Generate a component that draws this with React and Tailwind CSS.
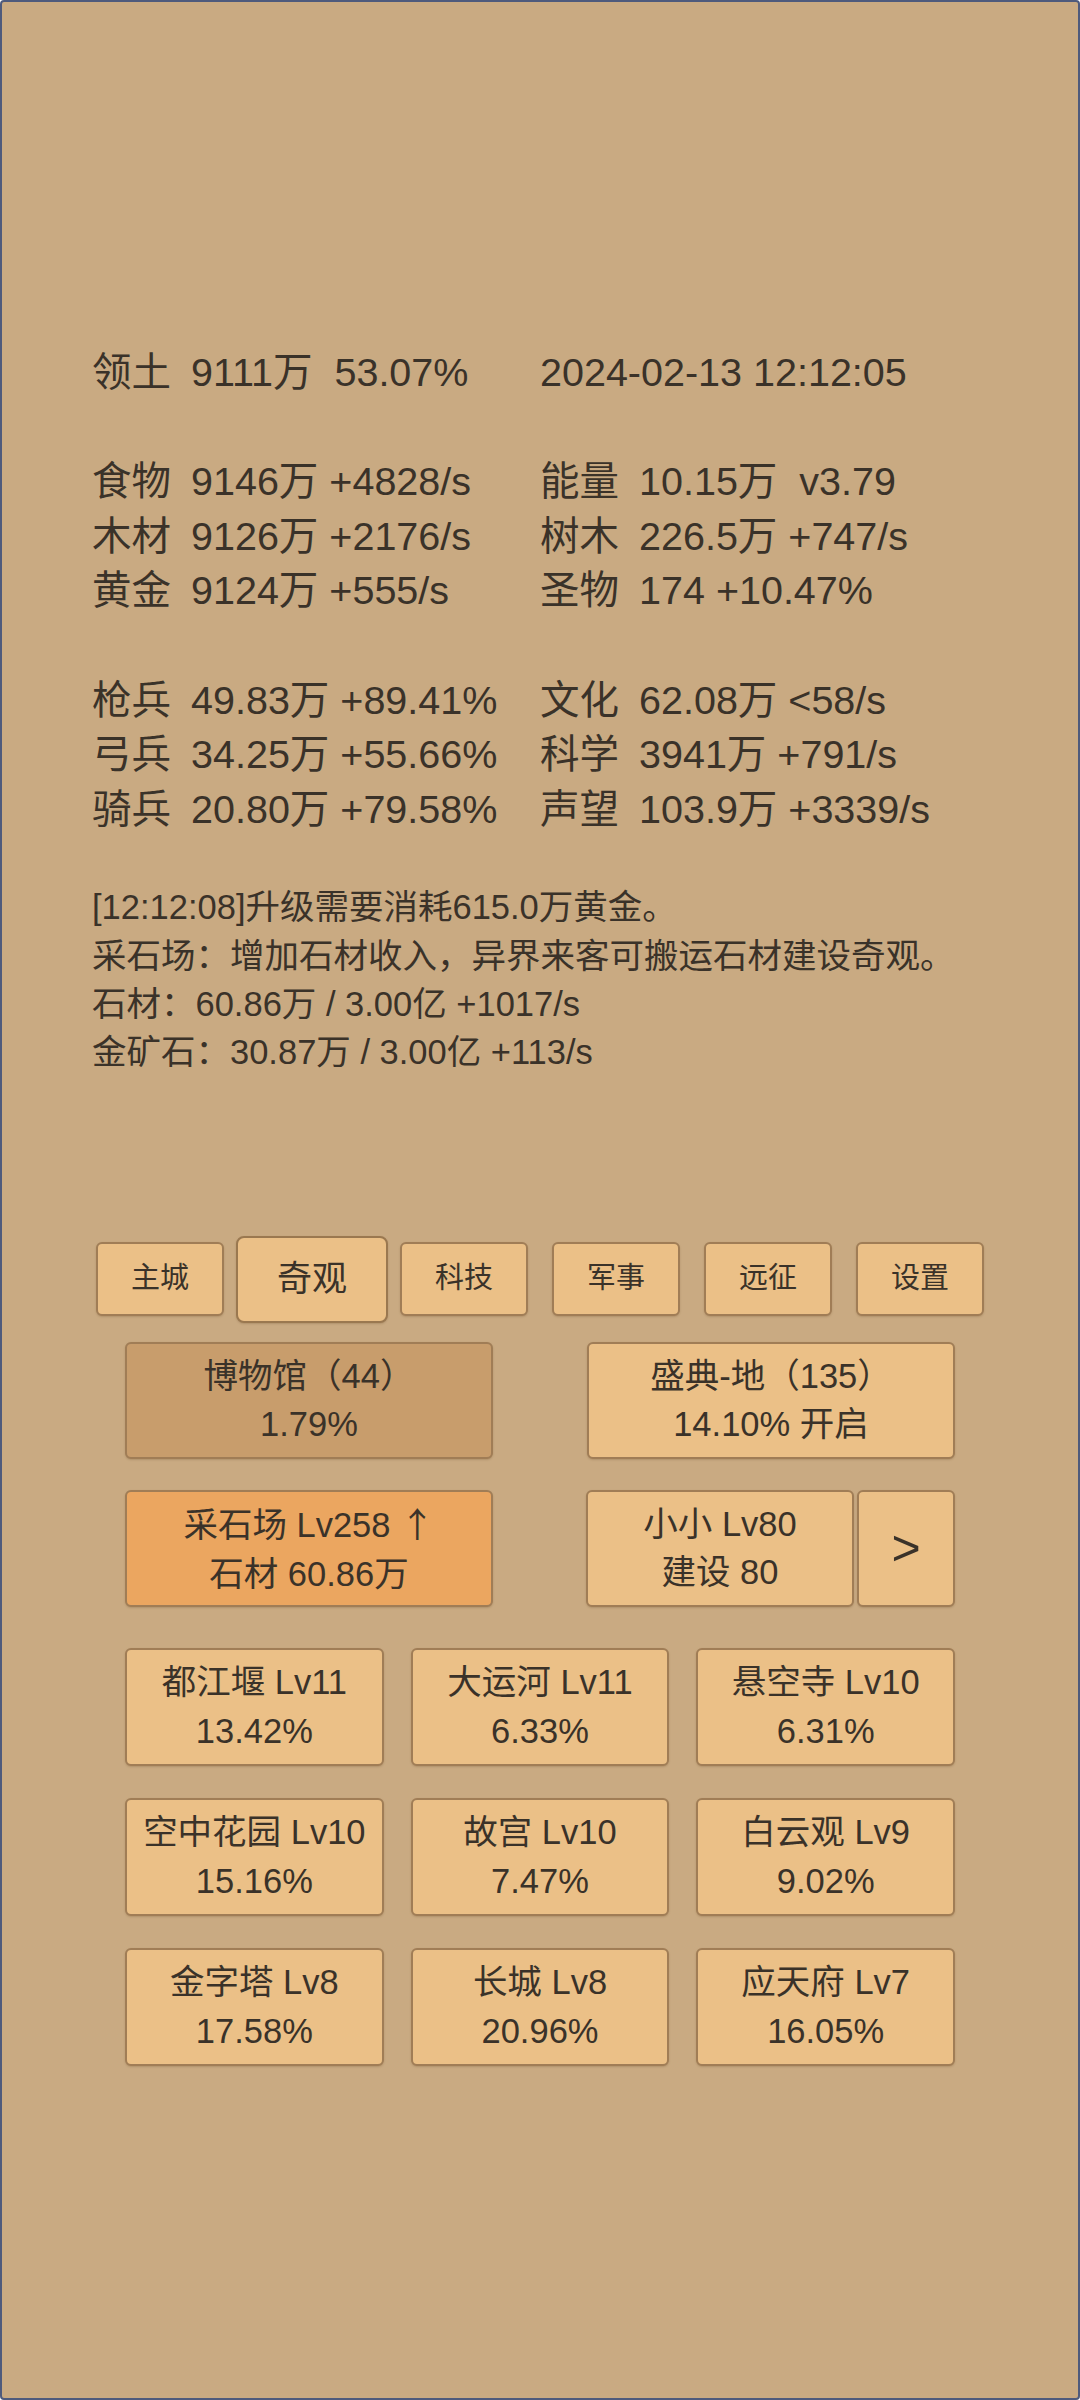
import React from "react";

const stats = [
  [["领土", "9111万  53.07%"], [null, "2024-02-13 12:12:05"]],
  null,
  [["食物", "9146万 +4828/s"], ["能量", "10.15万  v3.79"]],
  [["木材", "9126万 +2176/s"], ["树木", "226.5万 +747/s"]],
  [["黄金", "9124万 +555/s"], ["圣物", "174 +10.47%"]],
  null,
  [["枪兵", "49.83万 +89.41%"], ["文化", "62.08万 <58/s"]],
  [["弓兵", "34.25万 +55.66%"], ["科学", "3941万 +791/s"]],
  [["骑兵", "20.80万 +79.58%"], ["声望", "103.9万 +3339/s"]],
];

const logLines = [
  "[12:12:08]升级需要消耗615.0万黄金。",
  "采石场：增加石材收入，异界来客可搬运石材建设奇观。",
  "石材：60.86万 / 3.00亿 +1017/s",
  "金矿石：30.87万 / 3.00亿 +113/s",
];

const tabs = ["主城", "奇观", "科技", "军事", "远征", "设置"];

const wonders = [
  ["都江堰 Lv11", "13.42%"],
  ["大运河 Lv11", "6.33%"],
  ["悬空寺 Lv10", "6.31%"],
  ["空中花园 Lv10", "15.16%"],
  ["故宫 Lv10", "7.47%"],
  ["白云观 Lv9", "9.02%"],
  ["金字塔 Lv8", "17.58%"],
  ["长城 Lv8", "20.96%"],
  ["应天府 Lv7", "16.05%"],
];

const btn =
  "border-2 border-[#a07d56] rounded-[6px] shadow-[0_1px_2px_rgba(80,50,20,0.2)] flex flex-col items-center justify-center text-[34.5px] leading-[48.3px] whitespace-pre";

const StatCell = ({ cell }) => {
  const [label, value] = cell;
  return (
    <div className="h-[54.6px] leading-[54.6px] whitespace-pre">
      {label && <span className="inline-block w-[99px]">{label}</span>}
      <span>{value}</span>
    </div>
  );
};

export default function App() {
  return (
    <div className="w-[1080px] h-[2400px] bg-[#c9aa82] border-2 border-[#4e5a7c] rounded-[4px] text-[#3a3229] font-['Liberation_Sans','Noto_Sans_CJK_SC',sans-serif] overflow-hidden">
      <div className="pt-[343px] pl-[90px] text-[39.5px]">
        {stats.map((row, i) =>
          row ? (
            <div key={i} className="grid grid-cols-[448px_1fr]">
              <StatCell cell={row[0]} />
              <StatCell cell={row[1]} />
            </div>
          ) : (
            <div key={i} className="h-[54.6px]" />
          )
        )}
      </div>

      <div className="mt-[47px] pl-[90px] text-[34.5px] leading-[48.3px]">
        {logLines.map((l) => (
          <div key={l} className="whitespace-pre">
            {l}
          </div>
        ))}
      </div>

      <div className="mt-[159px] ml-[82px] w-[912px] h-[87px] grid grid-cols-6">
        {tabs.map((t) => {
          const active = t === "奇观";
          return (
            <div key={t} className="flex items-center justify-center">
              <div
                className={
                  active
                    ? "w-[153px] h-[87px] bg-[#ebc087] border-2 border-[#9a7850] rounded-[8px] shadow-[0_1px_2px_rgba(80,50,20,0.2)] flex items-center justify-center text-[35px]"
                    : "w-[128px] h-[74px] bg-[#ebc087] border-2 border-[#a07d56] rounded-[6px] shadow-[0_1px_2px_rgba(80,50,20,0.2)] flex items-center justify-center text-[29px]"
                }
              >
                {t}
              </div>
            </div>
          );
        })}
      </div>

      <div className="mt-[19px] ml-[123px] w-[830px] flex justify-between">
        <div className={`${btn} w-[368px] h-[117px] bg-[#c89d6c]`}>
          <div>博物馆（44）</div>
          <div>1.79%</div>
        </div>
        <div className={`${btn} w-[368px] h-[117px] bg-[#ebc087]`}>
          <div>盛典-地（135）</div>
          <div>14.10% 开启</div>
        </div>
      </div>

      <div className="mt-[31px] ml-[123px] w-[830px] flex justify-between">
        <div className={`${btn} w-[368px] h-[117px] bg-[#eba660]`}>
          <div>
            采石场 Lv258 <span className="font-['Noto_Sans_CJK_SC',sans-serif]">↑</span>
          </div>
          <div>石材 60.86万</div>
        </div>
        <div className="flex gap-[3px]">
          <div className={`${btn} w-[268px] h-[117px] bg-[#ebc087]`}>
            <div>小小 Lv80</div>
            <div>建设 80</div>
          </div>
          <div className={`${btn} w-[98px] h-[117px] bg-[#ebc087] text-[50px] font-light`}>
            &gt;
          </div>
        </div>
      </div>

      <div className="mt-[41px] ml-[123px] w-[830px] grid grid-cols-3 gap-x-[27px] gap-y-[32px]">
        {wonders.map(([name, pct]) => (
          <div key={name} className={`${btn} h-[118px] bg-[#ebc087]`}>
            <div>{name}</div>
            <div>{pct}</div>
          </div>
        ))}
      </div>
    </div>
  );
}
